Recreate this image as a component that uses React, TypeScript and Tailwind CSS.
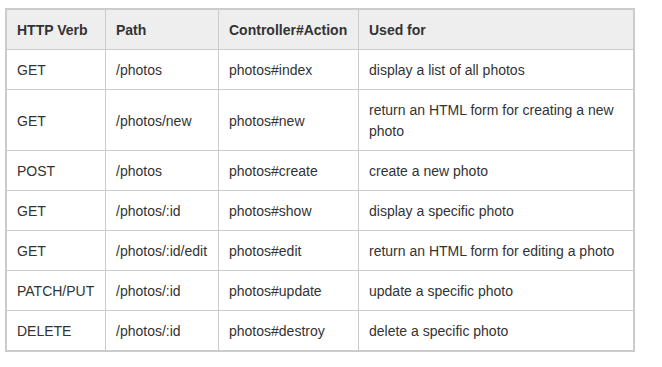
const rows: [string, string, string, string][] = [
	["GET", "/photos", "photos#index", "display a list of all photos"],
	["GET", "/photos/new", "photos#new", "return an HTML form for creating a new photo"],
	["POST", "/photos", "photos#create", "create a new photo"],
	["GET", "/photos/:id", "photos#show", "display a specific photo"],
	["GET", "/photos/:id/edit", "photos#edit", "return an HTML form for editing a photo"],
	["PATCH/PUT", "/photos/:id", "photos#update", "update a specific photo"],
	["DELETE", "/photos/:id", "photos#destroy", "delete a specific photo"],
];

const headers = ["HTTP Verb", "Path", "Controller#Action", "Used for"];

export default function App() {
	return (
		<div className="min-h-screen bg-white pt-[8px] pl-[5px] font-['Liberation_Sans',Arial,sans-serif] text-[14px] text-[#333]">
			<div className="w-[630px] border-2 border-[#ccc]">
				<table className="w-full table-fixed border-separate border-spacing-0">
					<colgroup>
						<col className="w-[98px]" />
						<col className="w-[113px]" />
						<col className="w-[140px]" />
						<col className="w-[275px]" />
					</colgroup>
					<thead>
						<tr className="bg-[#eee]">
							{headers.map((h) => (
								<th
									key={h}
									className="border-l border-[#ccc] px-[10px] pt-[10px] pb-[8px] text-left align-middle font-bold leading-[21px] first:border-l-0"
								>
									{h}
								</th>
							))}
						</tr>
					</thead>
					<tbody>
						{rows.map((r, i) => (
							<tr key={`row-${i}`}>
								{r.map((c, j) => (
									<td
										key={`cell-${i}-${j}`}
										className="border-t border-l border-[#ccc] px-[10px] pt-[10px] pb-[8px] align-middle leading-[21px] first:border-l-0"
									>
										{c}
									</td>
								))}
							</tr>
						))}
					</tbody>
				</table>
			</div>
		</div>
	);
}
